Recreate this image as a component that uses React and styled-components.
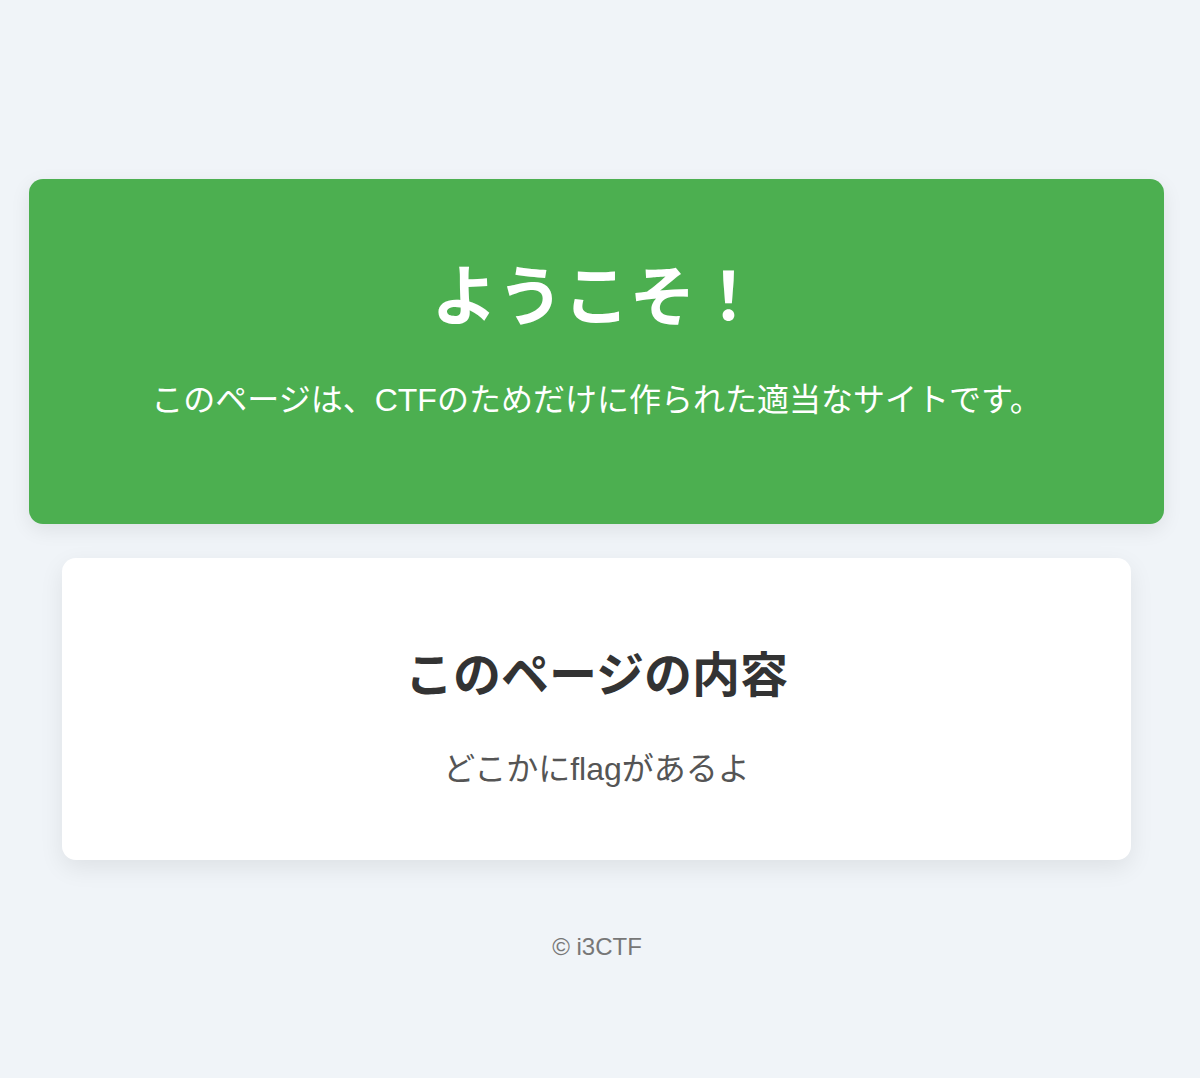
import React from 'react';
import styled, { createGlobalStyle } from 'styled-components';

const GlobalStyle = createGlobalStyle`
  html, body {
    margin: 0;
    padding: 0;
    background: #f0f4f8;
  }

  body {
    font-family: "Liberation Sans", "Noto Sans CJK JP", sans-serif;
    min-height: 1078px;
  }
`;

const Page = styled.div`
  padding-top: 179px;
  display: flex;
  flex-direction: column;
  align-items: flex-start;
`;

const Hero = styled.header`
  box-sizing: border-box;
  margin-left: 29px;
  width: 1135px;
  height: 345px;
  padding-top: 79px;
  background: #4caf50;
  color: #fff;
  border-radius: 14px;
  box-shadow: 0 6px 20px rgba(0, 0, 0, 0.08);
  text-align: center;
`;

const Title = styled.h1`
  margin: 0;
  font-size: 66px;
  line-height: 78px;
  font-weight: 700;
`;

const Lead = styled.p`
  margin: 44px 0 0;
  font-size: 32px;
  line-height: 40px;
`;

const Card = styled.section`
  box-sizing: border-box;
  margin: 34px 0 0 62px;
  width: 1069px;
  height: 302px;
  padding-top: 89px;
  background: #fff;
  border-radius: 14px;
  box-shadow: 0 8px 24px rgba(0, 0, 0, 0.08);
  text-align: center;
`;

const CardTitle = styled.h2`
  margin: 0;
  font-size: 48px;
  line-height: 58px;
  font-weight: 700;
  color: #333;
`;

const CardText = styled.p`
  margin: 44px 0 0;
  font-size: 32px;
  line-height: 40px;
  color: #555;
`;

const Footer = styled.footer`
  align-self: stretch;
  margin-top: 72px;
  padding-right: 6px;
  text-align: center;
  font-size: 24px;
  line-height: 30px;
  color: #777;
`;

export default function App() {
  return (
    <>
      <GlobalStyle />
      <Page>
        <Hero>
          <Title>ようこそ！</Title>
          <Lead>このページは、CTFのためだけに作られた適当なサイトです。</Lead>
        </Hero>
        <Card>
          <CardTitle>このページの内容</CardTitle>
          <CardText>どこかにflagがあるよ</CardText>
        </Card>
        <Footer>© i3CTF</Footer>
      </Page>
    </>
  );
}
